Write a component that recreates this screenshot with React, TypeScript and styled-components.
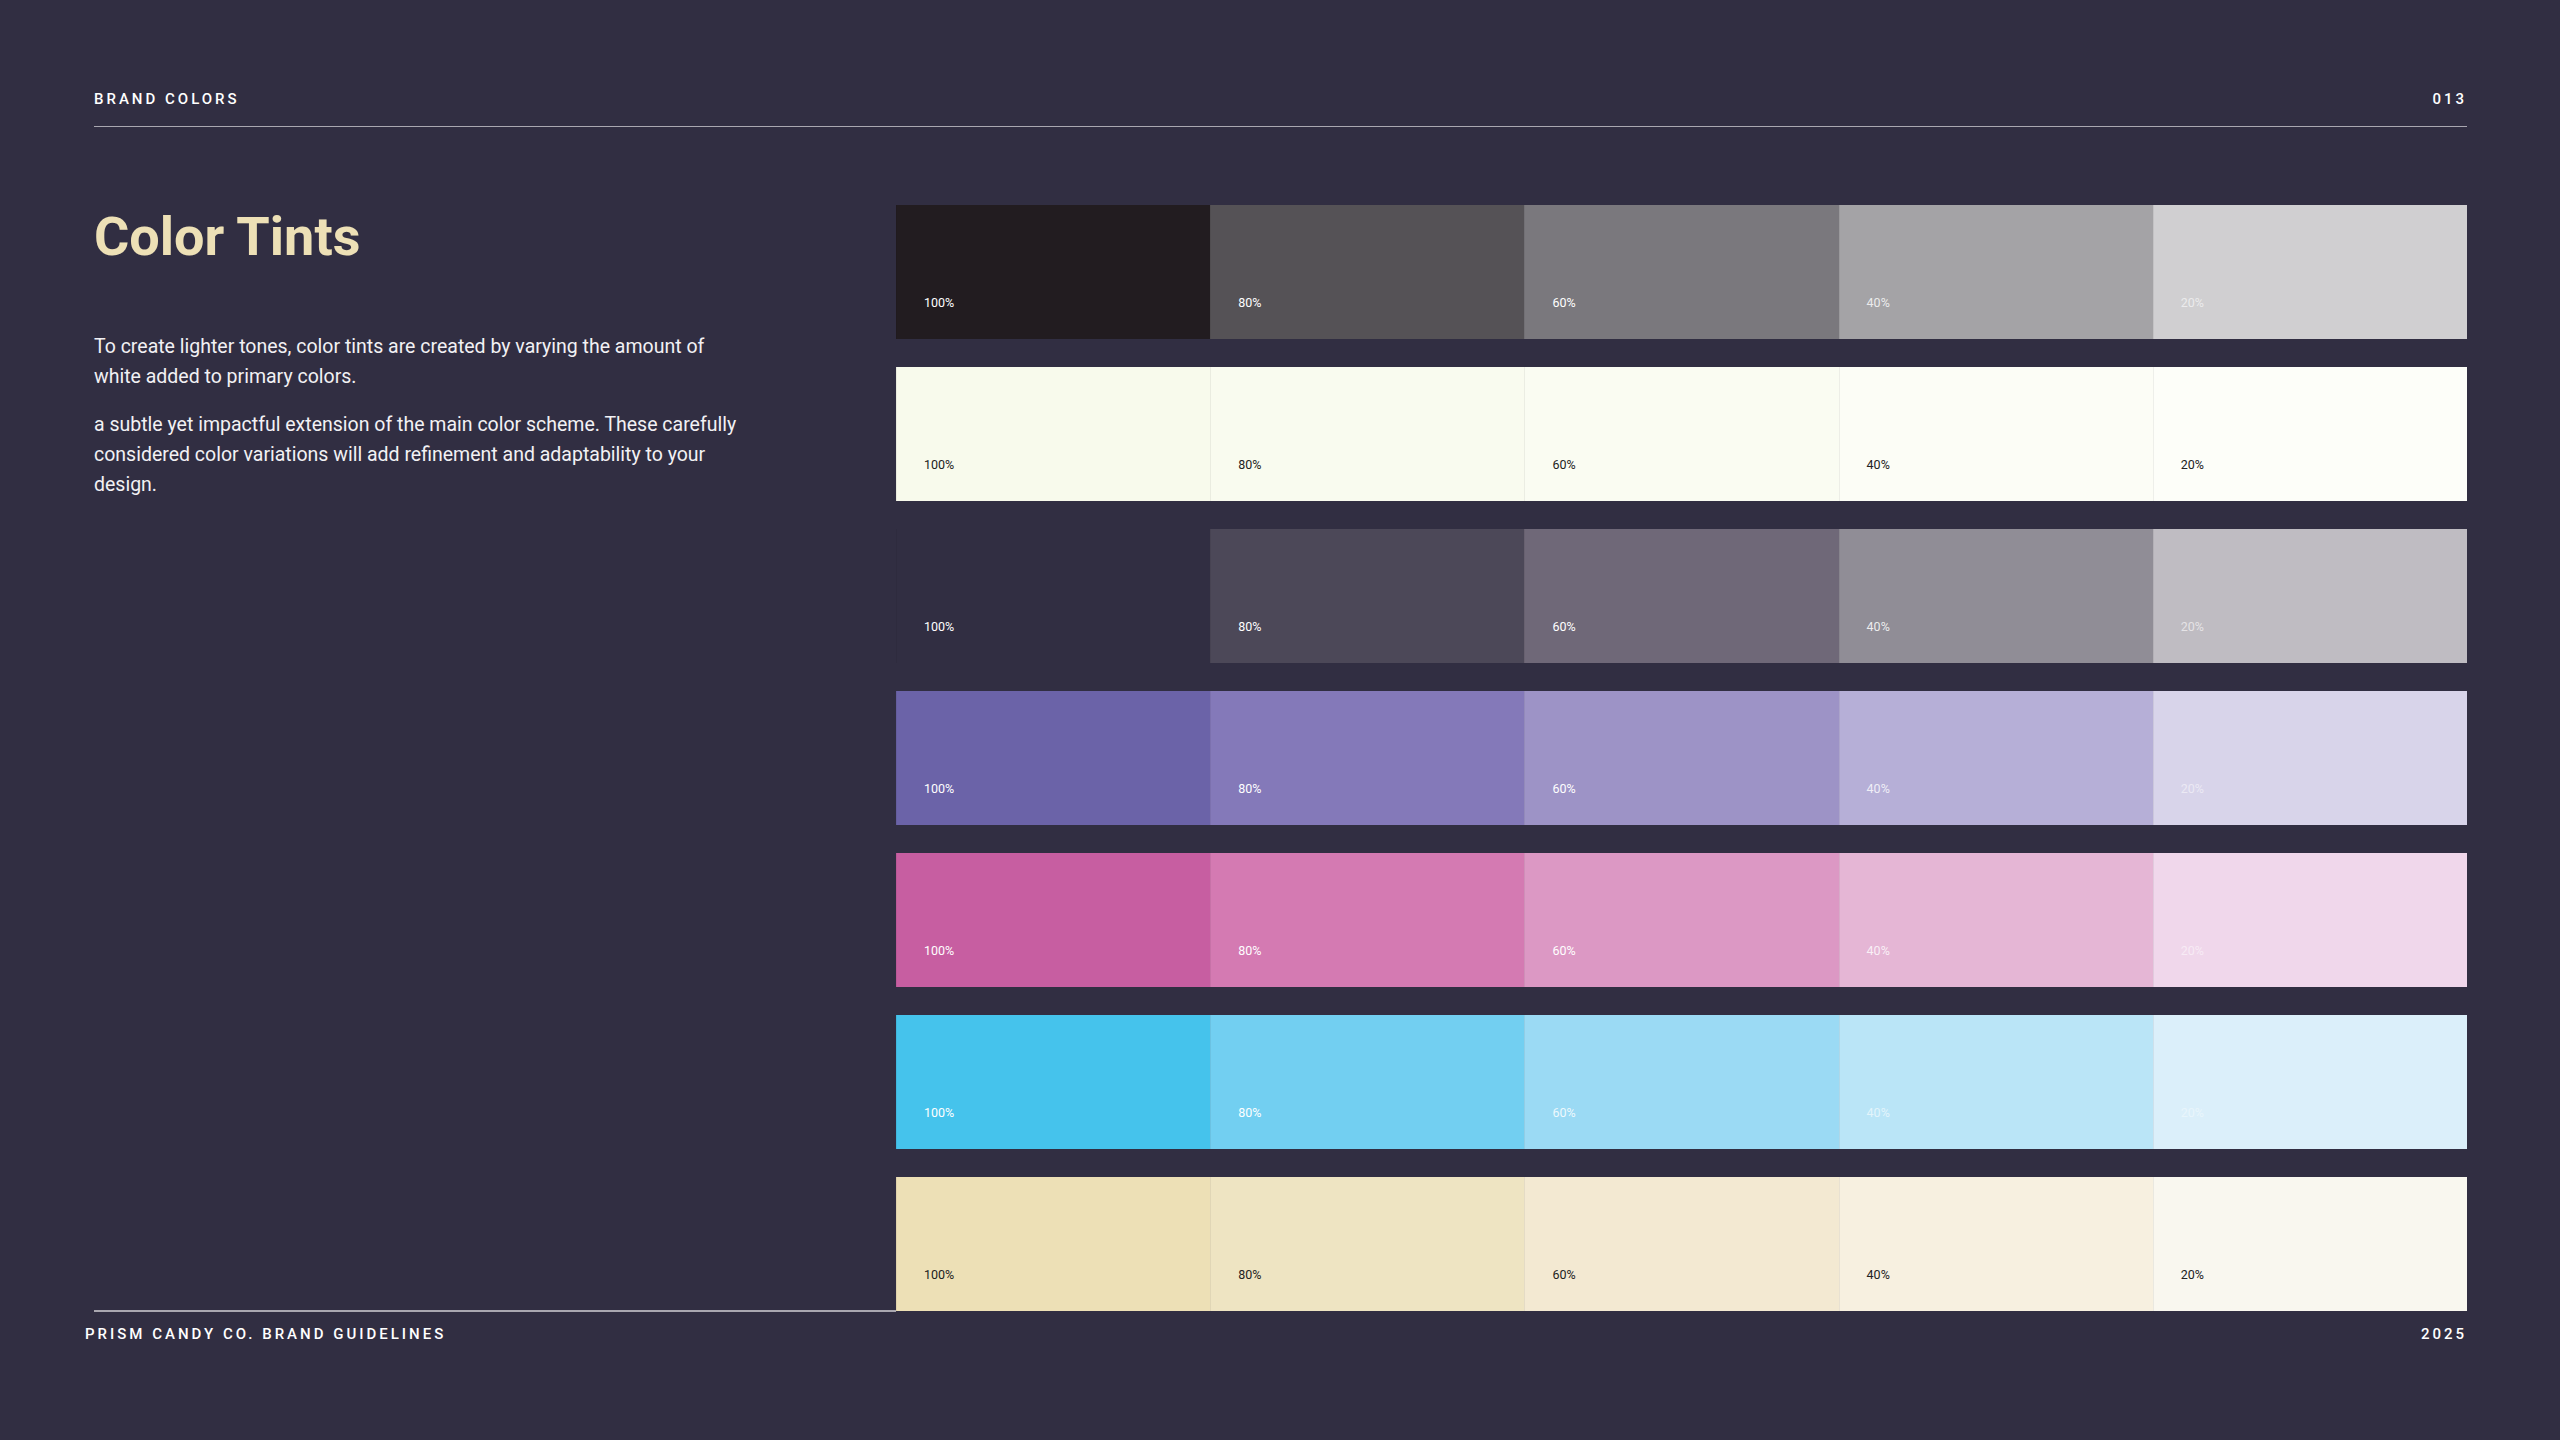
import React from "react";
import styled, { createGlobalStyle } from "styled-components";

const Global = createGlobalStyle`
  html, body { margin: 0; padding: 0; background: #312e42; }
  body { font-family: Roboto, "Liberation Sans", sans-serif; }
`;

const Page = styled.div`
  width: 2560px; height: 1440px; box-sizing: border-box;
  padding: 90px 93px 0 94px; display: flex; flex-direction: column;
  color: #fff;
`;
const Header = styled.div`
  display: flex; justify-content: space-between; align-items: center;
  font-size: 15px; letter-spacing: 3px; font-weight: 500;
  padding-bottom: 18px; border-bottom: 1.5px solid #a9a7b0;
`;
const Body = styled.div`
  display: flex; justify-content: space-between; margin-top: 78px;
`;
const Left = styled.div`
  width: 660px; display: flex; flex-direction: column;
`;
const Title = styled.h1`
  margin: 0; font-size: 54px; font-weight: 700; color: #ede0b6; line-height: 1.2;
`;
const Para = styled.p`
  margin: 0 0 18px; font-size: 19.5px; line-height: 30px; color: #f2f1f4;
  &:first-of-type { margin-top: 62px; }
`;
const Grid = styled.div`
  width: 1571px; display: flex; flex-direction: column; gap: 28px;
`;
const Row = styled.div`
  display: grid; grid-template-columns: repeat(5, 1fr); height: 134px;
`;
const Cell = styled.div<{ $bg: string; $fg: string }>`
  background: ${p => p.$bg}; color: ${p => p.$fg};
  border-left: 1px solid rgba(0,0,0,0.06);
  display: flex; align-items: flex-start; padding: 90px 0 0 27px;
  font-size: 12.5px;
`;
const FooterRow = styled.div`
  display: flex; justify-content: space-between; align-items: center;
  margin: 0 0 0 -9px; padding-top: 13px;
  font-size: 15px; letter-spacing: 3px; font-weight: 500;
`;
const FootLine = styled.div`
  height: 1.5px; background: #a9a7b0; margin-top: -1px; width: 802px;
`;

const rows: { c: string[]; fg: string[] }[] = [
  { c: ["#221c20", "#555256", "#7a787d", "#a4a3a6", "#d0cfd1"], fg: ["#fff", "#fff", "#fff", "rgba(255,255,255,.8)", "rgba(255,255,255,.6)"] },
  { c: ["#f8faec", "#f9fbef", "#fafcf2", "#fcfdf6", "#fdfef9"], fg: ["#222", "#222", "#222", "#222", "#222"] },
  { c: ["#312e42", "#4c4858", "#6f6878", "#908d96", "#bfbcc2"], fg: ["#fff", "#fff", "#fff", "rgba(255,255,255,.85)", "rgba(255,255,255,.6)"] },
  { c: ["#6b63a8", "#8479b9", "#9d93c6", "#b6afd7", "#d8d4ea"], fg: ["#fff", "#fff", "#fff", "rgba(255,255,255,.8)", "rgba(255,255,255,.5)"] },
  { c: ["#c75ea1", "#d47ab2", "#dc98c4", "#e5b6d5", "#f0d7eb"], fg: ["#fff", "#fff", "#fff", "rgba(255,255,255,.8)", "rgba(255,255,255,.5)"] },
  { c: ["#45c3ec", "#72cff1", "#9bdaf4", "#bae5f7", "#dbeffa"], fg: ["#fff", "#fff", "rgba(255,255,255,.85)", "rgba(255,255,255,.6)", "rgba(255,255,255,.4)"] },
  { c: ["#ede0b6", "#eee4c2", "#f3e9d2", "#f7f0e0", "#f9f7ef"], fg: ["#222", "#222", "#222", "#222", "#222"] },
];
const labels = ["100%", "80%", "60%", "40%", "20%"];

export default function App() {
  return (
    <Page>
      <Global />
      <Header><span>BRAND COLORS</span><span>013</span></Header>
      <Body>
        <Left>
          <Title>Color Tints</Title>
          <Para>To create lighter tones, color tints are created by varying the amount of white added to primary colors.</Para>
          <Para>a subtle yet impactful extension of the main color scheme. These carefully considered color variations will add refinement and adaptability to your design.</Para>
        </Left>
        <Grid>
          {rows.map((r, i) => (
            <Row key={i}>
              {r.c.map((c, j) => (
                <Cell key={j} $bg={c} $fg={r.fg[j]}>{labels[j]}</Cell>
              ))}
            </Row>
          ))}
        </Grid>
      </Body>
      <FootLine />
      <FooterRow><span>PRISM CANDY CO. BRAND GUIDELINES</span><span>2025</span></FooterRow>
    </Page>
  );
}
